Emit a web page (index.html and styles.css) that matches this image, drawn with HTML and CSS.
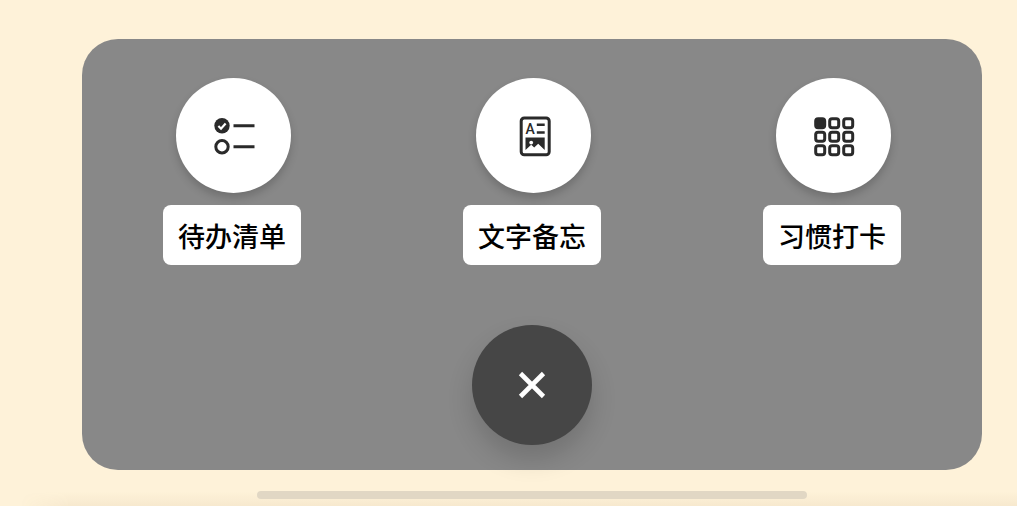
FILE: index.html
```html
<!DOCTYPE html>
<html lang="zh-CN">
<head>
    <meta charset="UTF-8">
    <meta name="viewport" content="width=device-width, initial-scale=1.0">
    <title>新建</title>
    <link rel="stylesheet" href="styles.css">
</head>
<body>
    <div class="page">
        <div class="panel">
            <div class="actions">
                <div class="action">
                    <div class="action-circle">
                        <svg class="icon" viewBox="0 0 48 48">
                            <circle class="icon-fill" cx="12" cy="13.8" r="7.7"/>
                            <path class="icon-check" d="M8.4 14l2.6 2.7 4.6-5.2"/>
                            <circle class="icon-line" cx="12" cy="34.8" r="6.2"/>
                            <path class="icon-line" d="M23.5 13.8h21M23.5 34.8h21"/>
                        </svg>
                    </div>
                    <div class="action-label">待办清单</div>
                </div>
                <div class="action">
                    <div class="action-circle">
                        <svg class="icon" viewBox="0 0 48 48">
                            <rect class="icon-line" x="11.2" y="6" width="28" height="36.8" rx="3"/>
                            <text class="icon-letter" x="15.6" y="21.9">A</text>
                            <path class="icon-thin" d="M26.8 12.8h7.9M26.8 20.5h7.9"/>
                            <path class="icon-fill" d="M15.5 25.6h19.2v12.4l-6.5-6.2-4 3.6-3-2.6-5.7 5.2z"/>
                            <circle class="icon-dot" cx="21.2" cy="30.6" r="1.9"/>
                        </svg>
                    </div>
                    <div class="action-label">文字备忘</div>
                </div>
                <div class="action">
                    <div class="action-circle">
                        <svg class="icon" viewBox="0 0 48 48">
                            <rect class="icon-fill icon-cell" x="5.7" y="6.7" width="9" height="9" rx="2.4"/>
                            <rect class="icon-line" x="19.7" y="6.7" width="9" height="9" rx="2.4"/>
                            <rect class="icon-line" x="33.7" y="6.7" width="9" height="9" rx="2.4"/>
                            <rect class="icon-line" x="5.7" y="20.2" width="9" height="9" rx="2.4"/>
                            <rect class="icon-line" x="19.7" y="20.2" width="9" height="9" rx="2.4"/>
                            <rect class="icon-line" x="33.7" y="20.2" width="9" height="9" rx="2.4"/>
                            <rect class="icon-line" x="5.7" y="33.7" width="9" height="9" rx="2.4"/>
                            <rect class="icon-line" x="19.7" y="33.7" width="9" height="9" rx="2.4"/>
                            <rect class="icon-line" x="33.7" y="33.7" width="9" height="9" rx="2.4"/>
                        </svg>
                    </div>
                    <div class="action-label">习惯打卡</div>
                </div>
            </div>
            <button class="close-btn">
                <svg class="close-icon" viewBox="0 0 30 30">
                    <path d="M3.5 3.5l23 23M26.5 3.5l-23 23"/>
                </svg>
            </button>
        </div>
        <div class="bottom-bar">
            <div class="home-indicator"></div>
        </div>
    </div>
</body>
</html>
```

FILE: styles.css
```css
* {
    margin: 0;
    padding: 0;
    box-sizing: border-box;
}

body {
    background-color: #fef2d9;
    font-family: "Noto Sans CJK SC", "Noto Sans", sans-serif;
    overflow: hidden;
}

.page {
    height: 506px;
    padding-top: 39px;
}

.panel {
    width: 900px;
    height: 431px;
    margin-left: 82px;
    padding-top: 39px;
    background-color: #888888;
    border-radius: 36px;
    display: flex;
    flex-direction: column;
    align-items: center;
}

.actions {
    width: 100%;
    display: grid;
    grid-template-columns: repeat(3, 1fr);
}

.action {
    display: flex;
    flex-direction: column;
    align-items: center;
    gap: 12px;
}

.action-circle {
    width: 115px;
    height: 115px;
    margin-left: 3px;
    background-color: white;
    border-radius: 50%;
    box-shadow: 0 5px 8px rgba(0,0,0,0.18);
    display: flex;
    justify-content: center;
    align-items: center;
}

.icon {
    width: 48px;
    height: 48px;
}

.icon-fill {
    fill: #2a2a2a;
}

.icon-cell {
    stroke: #2a2a2a;
    stroke-width: 3;
}

.icon-line {
    fill: none;
    stroke: #2a2a2a;
    stroke-width: 3;
}

.icon-thin {
    fill: none;
    stroke: #2a2a2a;
    stroke-width: 2.4;
}

.icon-check {
    fill: none;
    stroke: white;
    stroke-width: 2.2;
}

.icon-dot {
    fill: white;
}

.icon-letter {
    font-family: "Roboto", sans-serif;
    font-size: 14px;
    font-weight: 500;
    fill: #2a2a2a;
}

.action-label {
    width: 138px;
    height: 60px;
    background-color: white;
    border-radius: 8px;
    color: black;
    font-size: 27px;
    font-weight: 500;
    line-height: 62px;
    text-align: center;
}

.close-btn {
    width: 120px;
    height: 120px;
    margin-top: 60px;
    background-color: #464646;
    border: none;
    border-radius: 50%;
    box-shadow: 0 14px 26px rgba(0,0,0,0.16);
    display: flex;
    justify-content: center;
    align-items: center;
}

.close-icon {
    width: 30px;
    height: 30px;
    fill: none;
    stroke: white;
    stroke-width: 4.6;
}

.bottom-bar {
    height: 36px;
    margin-left: 20px;
    padding-top: 21px;
    background: linear-gradient(to bottom, transparent 60%, rgba(120,90,40,0.06));
    mask-image: linear-gradient(to right, transparent, black 50px);
}

.home-indicator {
    width: 550px;
    height: 8px;
    margin-left: 237px;
    background-color: #e1d7c4;
    border-radius: 4px;
}
```
